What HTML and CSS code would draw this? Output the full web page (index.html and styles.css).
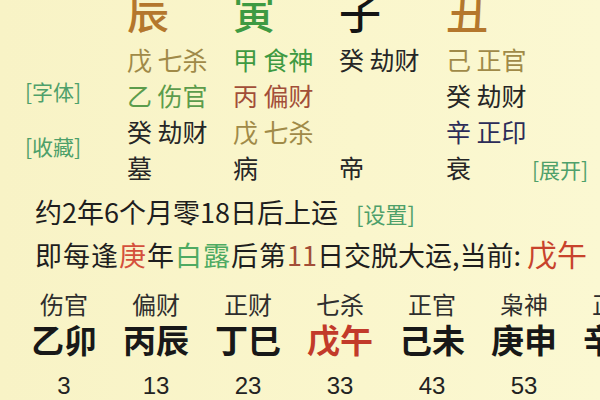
FILE: index.html
```html
<!DOCTYPE html>
<html lang="zh">
<head>
<meta charset="utf-8">
<link rel="stylesheet" href="styles.css">
</head>
<body>
<div class="page">
  <div class="top">
    <div class="side">
      <span class="link">[字体]</span>
      <span class="link">[收藏]</span>
    </div>
    <div class="grid">
      <div class="big c-brown">辰</div>
      <div class="big c-green">寅</div>
      <div class="big c-black">子</div>
      <div class="big c-brown">丑</div>
      <div></div>

      <div class="cell c-olive">戊 七杀</div>
      <div class="cell c-green">甲 食神</div>
      <div class="cell c-dark">癸 劫财</div>
      <div class="cell c-olive">己 正官</div>
      <div></div>

      <div class="cell c-lgreen">乙 伤官</div>
      <div class="cell c-red">丙 偏财</div>
      <div class="cell"></div>
      <div class="cell c-dark">癸 劫财</div>
      <div></div>

      <div class="cell c-dark">癸 劫财</div>
      <div class="cell c-olive">戊 七杀</div>
      <div class="cell"></div>
      <div class="cell c-navy">辛 正印</div>
      <div></div>

      <div class="cell c-dark">墓</div>
      <div class="cell c-dark">病</div>
      <div class="cell c-dark">帝</div>
      <div class="cell c-dark">衰</div>
      <div class="cell"><span class="link">[展开]</span></div>
    </div>
  </div>

  <div class="info">
    <div class="line">约2年6个月零18日后上运 <span class="link small">[设置]</span></div>
    <div class="line line2"><span class="wide">即每逢<span class="c-hot">庚</span>年<span class="c-lgreen2">白露</span>后第</span><span class="c-red">11</span>日交脱大运,当前: <span class="cur">戊午</span></div>
  </div>

  <div class="luck">
    <div class="col"><div class="god">伤官</div><div class="gz">乙卯</div><div class="age">3</div></div>
    <div class="col"><div class="god">偏财</div><div class="gz">丙辰</div><div class="age">13</div></div>
    <div class="col"><div class="god">正财</div><div class="gz">丁巳</div><div class="age">23</div></div>
    <div class="col"><div class="god">七杀</div><div class="gz now">戊午</div><div class="age">33</div></div>
    <div class="col"><div class="god">正官</div><div class="gz">己未</div><div class="age">43</div></div>
    <div class="col"><div class="god">枭神</div><div class="gz">庚申</div><div class="age">53</div></div>
    <div class="col"><div class="god">正印</div><div class="gz">辛酉</div><div class="age">63</div></div>
  </div>
</div>
</body>
</html>
```

FILE: styles.css
```css
html, body {
  margin: 0;
  padding: 0;
}
body {
  width: 600px;
  height: 400px;
  overflow: hidden;
  background: #faf6cb;
  font-family: "Noto Sans CJK SC", "Noto Sans", sans-serif;
  color: #1e1e1e;
}
.page {
  width: 600px;
  height: 400px;
  overflow: hidden;
  background: linear-gradient(90deg, #f8f3c6 0%, #faf6cc 60%, #fbf8d2 100%);
}
.top {
  display: flex;
}
.side {
  width: 127px;
  box-sizing: border-box;
  padding: 78px 0 0 25px;
  display: flex;
  flex-direction: column;
  gap: 29px;
}
.side .link {
  font-size: 21px;
  line-height: 26px;
}
.link {
  color: #4ea06a;
}
.grid {
  display: grid;
  grid-template-columns: 106px 106px 107px 86px auto;
  grid-template-rows: 41px 36px 36px 36px 36px;
}
.big {
  font-size: 42px;
  line-height: 22px;
  align-self: start;
  font-weight: 500;
}
.cell {
  font-size: 25px;
  line-height: 36px;
  white-space: nowrap;
}
.cell .link {
  font-size: 21px;
}
.c-brown { color: #b4772d; }
.c-green { color: #3e9a42; }
.c-lgreen { color: #5c9c4c; }
.c-black { color: #141414; }
.c-dark { color: #262626; }
.c-olive { color: #a08a48; }
.c-red { color: #a24e38; }
.c-navy { color: #2c2c58; }
.c-hot { color: #d4503c; }
.c-lgreen2 { color: #4eaa62; }

.info {
  padding-left: 35px;
  margin-top: 9px;
}
.line {
  font-size: 27px;
  line-height: 36px;
  white-space: nowrap;
}
.line .small {
  font-size: 22px;
  margin-left: 12px;
}
.line2 {
  line-height: 40px;
  margin-top: 4px;
}
.wide {
  letter-spacing: 1px;
}
.cur {
  color: #c8432c;
  font-size: 30px;
  line-height: 20px;
}

.luck {
  display: flex;
  padding-left: 18px;
  margin-top: 15px;
}
.col {
  flex: 0 0 92px;
  display: flex;
  flex-direction: column;
  align-items: center;
  white-space: nowrap;
}
.god {
  font-size: 24px;
  line-height: 28px;
  color: #2e2e2e;
}
.gz {
  font-size: 33px;
  line-height: 42px;
  font-weight: 700;
  color: #181818;
}
.gz.now {
  color: #c23a2a;
}
.age {
  font-size: 24px;
  line-height: 52px;
  color: #222;
  font-family: "Liberation Sans", "Noto Sans CJK SC", sans-serif;
}
```
